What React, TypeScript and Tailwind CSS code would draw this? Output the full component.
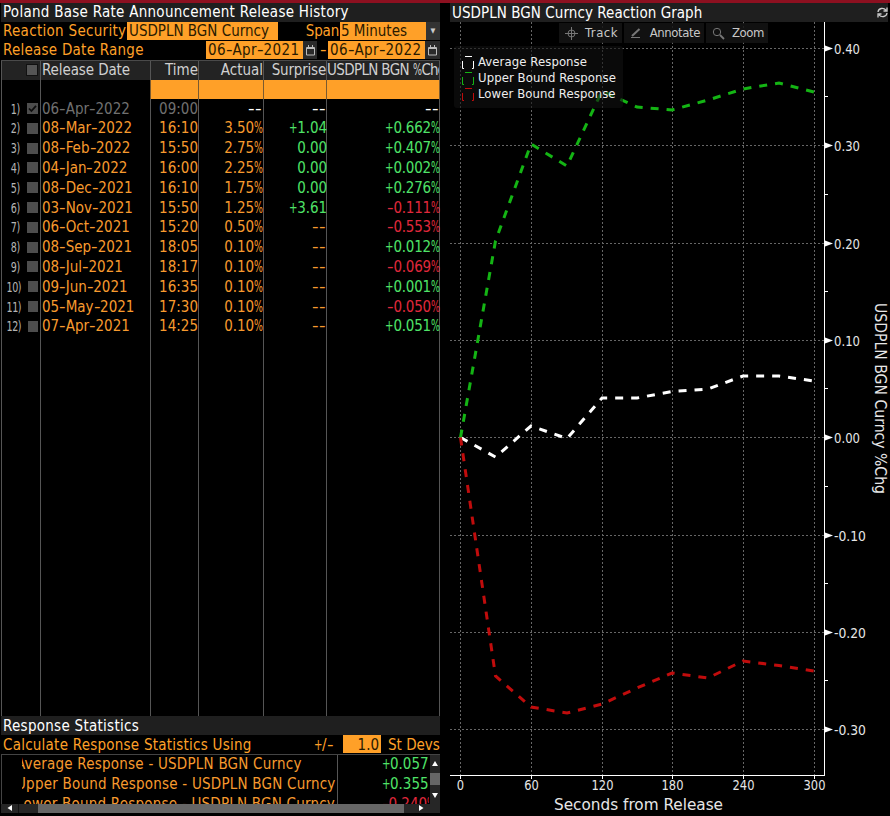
type Release = {
  date: string;
  time: string;
  actual: string;
  surprise: string;
  change: string;
};

const releases: Release[] = [
  { date: '06-Apr-2022', time: '09:00', actual: '--', surprise: '--', change: '--' },
  { date: '08-Mar-2022', time: '16:10', actual: '3.50%', surprise: '+1.04', change: '+0.662%' },
  { date: '08-Feb-2022', time: '15:50', actual: '2.75%', surprise: '0.00', change: '+0.407%' },
  { date: '04-Jan-2022', time: '16:00', actual: '2.25%', surprise: '0.00', change: '+0.002%' },
  { date: '08-Dec-2021', time: '16:10', actual: '1.75%', surprise: '0.00', change: '+0.276%' },
  { date: '03-Nov-2021', time: '15:50', actual: '1.25%', surprise: '+3.61', change: '-0.111%' },
  { date: '06-Oct-2021', time: '15:20', actual: '0.50%', surprise: '--', change: '-0.553%' },
  { date: '08-Sep-2021', time: '18:05', actual: '0.10%', surprise: '--', change: '+0.012%' },
  { date: '08-Jul-2021', time: '18:17', actual: '0.10%', surprise: '--', change: '-0.069%' },
  { date: '09-Jun-2021', time: '16:35', actual: '0.10%', surprise: '--', change: '+0.001%' },
  { date: '05-May-2021', time: '17:30', actual: '0.10%', surprise: '--', change: '-0.050%' },
  { date: '07-Apr-2021', time: '14:25', actual: '0.10%', surprise: '--', change: '+0.051%' },
];

const stats = [
  { label: 'Average Response - USDPLN BGN Curncy', value: '+0.057%' },
  { label: 'Upper Bound Response - USDPLN BGN Curncy', value: '+0.355%' },
  { label: 'Lower Bound Response - USDPLN BGN Curncy', value: '-0.240%' },
];

const columns = 'grid grid-cols-[39px_110px_48px_65px_63px_113px]';

function tone(value: string, dim: boolean) {
  if (dim) return 'text-white';
  if (value === '--') return 'text-[#f79a2e]';
  return value.startsWith('-') ? 'text-[#e0283c]' : 'text-[#4fe368]';
}

const signs: Record<string, string> = {
  '%': 'inline-block w-[9px] origin-left scale-x-[0.7] text-left',
  '+': 'inline-block w-[8px] origin-left scale-x-[0.75] text-left',
  '-': 'inline-block w-[6.5px] origin-left scale-x-[1.35] text-left',
};

function Glyphs({ text }: { text: string }) {
  return (
    <span className={`whitespace-nowrap ${text === '--' ? 'mr-[2px]' : ''}`}>
      {text.split(/([%+-])/).filter(Boolean).map((part, i) => (
        signs[part] ? <span key={i} className={signs[part]}>{part}</span> : part
      ))}
    </span>
  );
}

function CalendarIcon() {
  return (
    <svg width="11" height="13" fill="none" stroke="#bbb">
      <path d="M1.500 3.500h8v7.500h-8zM1 4.500h9" />
      <path d="M3.500 1v3M7.500 1v3" />
    </svg>
  );
}

function ReleaseTable() {
  return (
    <div className="relative h-[656px] border-t border-[#4a4a4a]">
      {/* Column rules run the full height of the table */}
      <div className={`${columns} absolute inset-0 border-l border-[#555]`}>
        {[0, 1, 2, 3, 4, 5].map((i) => (
          <div key={i} className="border-r border-[#555]" />
        ))}
      </div>
      <div className="relative">
        <div className="h-[19px] bg-[#232323]">
          <div className={`${columns} h-[19px] border-l border-[#555] leading-[18px] text-[#d0d0d0]`}>
            <div className="flex justify-end border-r border-[#555] pr-[2px] pt-[3px]">
              <span className="h-[12px] w-[12px] border border-[#111] bg-[#555]" />
            </div>
            <div className="border-r border-[#555] pl-px tracking-[-0.1px]">Release Date</div>
            <div className="border-r border-[#555] text-right">Time</div>
            <div className="border-r border-[#555] text-right">Actual</div>
            <div className="whitespace-nowrap border-r border-[#555] text-right tracking-[-0.2px]">Surprise</div>
            <div className="overflow-hidden whitespace-nowrap border-r border-[#555] tracking-[-0.65px]">
              USDPLN BGN <span className="tracking-[-1px]"><Glyphs text="%Chg" /></span>
            </div>
          </div>
        </div>
        <div className={`${columns} h-[18.6px] pl-px`}>
          <div />
          <div className="border-r border-[#7a5a30]" />
          <div className="border-r border-[#7a5a30] bg-[#ffa028]" />
          <div className="border-r border-[#7a5a30] bg-[#ffa028]" />
          <div className="border-r border-[#7a5a30] bg-[#ffa028]" />
          <div className="border-r border-[#7a5a30] bg-[#ffa028]" />
        </div>
        {releases.map((r, i) => (
          <div
            key={r.date}
            className={`${columns} h-[19.8px] pl-px leading-[20px] ${i === 0 ? 'text-[#707070]' : 'text-[#f79a2e]'}`}
          >
            <div className="flex items-center justify-end gap-[7px] pr-[3px]">
              <span className="origin-right scale-x-[0.76] text-[14px] tracking-[-0.6px] text-[#b4b4b4]">{i + 1})</span>
              <span className="grid h-[11px] w-[11px] place-items-center bg-[#4d4d4d]">
                {i === 0 && (
                  <svg width="9" height="9" viewBox="0 0 9 9" fill="none" stroke="#0c0c0c" strokeWidth="1.8">
                    <path d="M1 4.5 3.4 7 8 1.8" />
                  </svg>
                )}
              </span>
            </div>
            <div className="pl-px"><Glyphs text={r.date} /></div>
            <div className="pr-px text-right">{r.time}</div>
            <div className={`pr-px text-right tracking-[-0.1px] ${i === 0 ? 'text-white' : ''}`}><Glyphs text={r.actual} /></div>
            <div className={`text-right tracking-[-0.1px] ${tone(r.surprise, i === 0)}`}><Glyphs text={r.surprise} /></div>
            <div className={`text-right tracking-[-0.2px] ${tone(r.change, i === 0)}`}><Glyphs text={r.change} /></div>
          </div>
        ))}
      </div>
    </div>
  );
}

function HistoryPanel() {
  return (
    <section className="ml-px w-[439px] text-[15px]">
      <h1 className="h-[19px] bg-[#1f1f1f] pl-[2px] leading-[18px] tracking-[0.27px] text-white">Poland Base Rate Announcement Release History</h1>
      <div className="flex h-[19px] whitespace-nowrap leading-[18px] text-[#ffa028]">
        <span className="w-[126px] pl-[2px] tracking-[0.3px]">Reaction Security</span>
        <span className="h-[18px] w-[151px] bg-[#ffa028] pl-[2px] text-[#2a1a00]">USDPLN BGN Curncy</span>
        <span className="w-[62px] pr-px text-right tracking-[-0.2px]">Span</span>
        <span className="h-[18px] w-[86px] bg-[#ffa028] pl-px text-[#2a1a00]">5 Minutes</span>
        <span className="grid h-[18px] w-[14px] place-items-center bg-[#333] text-[7px] text-[#ccc]">▼</span>
      </div>
      <div className="flex h-[19px] whitespace-nowrap leading-[18px] text-[#ffa028]">
        <span className="w-[205px] pl-[2px] tracking-[0.25px]">Release Date Range</span>
        <span className="h-[18px] w-[97px] bg-[#ffa028] pl-[2px] tracking-[0.4px] text-[#2a1a00]"><Glyphs text="06-Apr-2021" /></span>
        <span className="grid h-[18px] w-[14px] place-items-center bg-[#2a2a2a]"><CalendarIcon /></span>
        <span className="w-[11px] pl-[3px]"><Glyphs text="-" /></span>
        <span className="h-[18px] w-[97px] bg-[#ffa028] pl-[2px] tracking-[0.4px] text-[#2a1a00]"><Glyphs text="06-Apr-2022" /></span>
        <span className="grid h-[18px] w-[15px] place-items-center bg-[#2a2a2a]"><CalendarIcon /></span>
      </div>
      <ReleaseTable />
      <h2 className="h-[19px] bg-[#1f1f1f] pl-[2px] leading-[20px] tracking-[0.28px] text-white">Response Statistics</h2>
      <div className="flex h-[19px] whitespace-nowrap leading-[20px] text-[#ffa028]">
        <span className="w-[313px] pl-[2px] tracking-[0.24px]">Calculate Response Statistics Using</span>
        <span className="w-[29px]"><Glyphs text="+/-" /></span>
        <span className="h-[18px] w-[38px] bg-[#ffa028] pr-[2px] text-right text-[#2a1a00]">1.0</span>
        <span className="flex-1 pl-[7px]">St Devs</span>
      </div>
      <div className="flex h-[50px] overflow-hidden border-l border-t border-[#444]">
        <div className="w-[428px]">
          {stats.map((s) => (
            <div key={s.label} className="flex h-[19.8px] leading-[19px]">
              <div className="ml-[20px] w-[316px] overflow-hidden whitespace-nowrap border-r border-[#555] tracking-[0.22px] text-[#f79a2e]">
                <span className="-ml-[6px]">{s.label}</span>
              </div>
              <div className={`w-[91px] overflow-hidden pl-[44px] ${tone(s.value, false)}`}><Glyphs text={s.value} /></div>
            </div>
          ))}
        </div>
        <div className="flex w-[10px] shrink-0 flex-col bg-[#262626]">
          <svg width="10" height="18"><path d="M2 11 5 6l3 5z" fill="#fff" /></svg>
          <div className="h-[12px] bg-[#666]" />
          <svg width="10" height="19"><path d="M2 8h6l-3 5z" fill="#fff" /></svg>
        </div>
      </div>
      <div className="flex h-[9px] bg-[#262626]">
        <svg width="37" height="9"><path d="M11 1v6L6.5 4z" fill="#fff" /><path d="M17.5 0v9" stroke="#111" /></svg>
        <div className="w-[366px] bg-[#666]" />
        <svg width="36" height="9"><path d="M15 1v6l4.500-3z" fill="#fff" /></svg>
      </div>
    </section>
  );
}

// Chart coordinates are relative to the plot's left edge and the bottom of the title bar
const gridX = [10.5, 81.5, 152.5, 222.5, 293.5, 364.5];
const gridY = [26.5, 123.5, 221.5, 318.5, 415.5, 513.5, 610.5, 707.5];
const xLabels = ['0', '60', '120', '180', '240', '300'];
const yLabels = ['0.40', '0.30', '0.20', '0.10', '0.00', '-0.10', '-0.20', '-0.30'];

const lines = [
  { color: '#fff', points: '10.5,415.5 45.5,435 81,404 117,416.5 152,376 187,376 222,369.5 258,367 293,354 329,354 364,359' },
  { color: '#14b414', points: '10.5,415.5 45.5,219 81,122 117,144 152,69 187,85 222,88 258,78 293,67 329,61 364,70' },
  { color: '#c00c0c', points: '10.5,415.5 45.5,654 81,685 117,691 152,682 187,666 222,651 258,656 293,639 329,643.5 364,649' },
];

const legend = [
  { label: 'Average Response', color: '#fff' },
  { label: 'Upper Bound Response', color: '#14b414' },
  { label: 'Lower Bound Response', color: '#c00c0c' },
];

function ReactionChart() {
  return (
    <svg width="440" height="794" className="block">
      <g stroke="#666" strokeDasharray="2 2">
        {gridX.map((x) => <path key={x} d={`M${x} 0V753`} />)}
        {gridY.map((y) => <path key={y} d={`M0 ${y}H374`} />)}
      </g>
      {lines.map((l) => (
        <polyline key={l.color} points={l.points} fill="none" stroke={l.color} strokeWidth="3" strokeDasharray="8 8" />
      ))}
      <g stroke="#fff">
        <path d="M374.5 0V754M0 753.5H375" />
        {gridX.map((x) => <path key={x} d={`M${x} 753V757`} />)}
        {gridY.slice(1).map((y) => <path key={y} d={`M374 ${y - 49}H378`} />)}
      </g>
      <g fill="#e6e6e6" fontSize="14">
        {gridY.map((y, i) => (
          <g key={y}>
            <path d={`M375 ${y - 3}L383 ${y}L375 ${y + 3}z`} fill="#fff" />
            <text x={384} y={y + 5.5} textLength={yLabels[i].length === 5 ? 32 : 26} lengthAdjust="spacingAndGlyphs">{yLabels[i]}</text>
          </g>
        ))}
        {gridX.map((x, i) => (
          <text key={x} x={x} y="768" textAnchor="middle" textLength={xLabels[i].length * 7.3} lengthAdjust="spacingAndGlyphs">{xLabels[i]}</text>
        ))}
      </g>
      <text x="188.5" y="788" textAnchor="middle" fill="#e6e6e6" fontSize="15.5" textLength="169" lengthAdjust="spacingAndGlyphs">Seconds from Release</text>
      <text transform="translate(425 281) rotate(90)" fill="#e6e6e6" fontSize="15.5" textLength="191" lengthAdjust="spacingAndGlyphs">USDPLN BGN Curncy %Chg</text>
    </svg>
  );
}

function GraphPanel() {
  return (
    <section className="ml-[10px] w-[440px]">
      <div className="flex h-[19px] w-[438px] items-center justify-between bg-[#1f1f1f] pl-[2px] text-[15px] text-white">
        <h1 className="leading-[18px] tracking-[0.06px]">USDPLN BGN Curncy Reaction Graph</h1>
        <svg width="11" height="11" viewBox="0 0 11 11" fill="none" stroke="#ccc" strokeWidth="1.3">
          <path d="M1 5C1.500 1 6.500.3 9 3.200M10 .5v3.500H6.500M10 6C9.500 10 4.500 10.700 2 7.800M1 10.500V7h3.500" />
        </svg>
      </div>
      <div className="relative">
        <ReactionChart />
        {/* Chart tools */}
        <div className="absolute left-[109px] top-[1px] flex h-[20px] gap-[2px] text-[13px] leading-[20px] text-[#c8c8c8]">
          <button className="flex w-[63px] items-center justify-between bg-[#141414]/85 pl-[6px] pr-[4px]">
            <svg width="13" height="13" fill="none" stroke="#777"><circle cx="6.5" cy="6.5" r="3.5" /><path d="M6.500 0v13M0 6.500h13" /></svg>
            <span className="tracking-[0.5px]">Track</span>
          </button>
          <button className="flex w-[80px] items-center justify-between bg-[#141414]/85 pl-[6px] pr-[4px]">
            <svg width="12" height="12" fill="none" stroke="#777"><path d="M2 9 9.500 2" strokeWidth="2" /><path d="M1 10.500h9" /></svg>
            <span className="tracking-[-0.4px]">Annotate</span>
          </button>
          <button className="flex w-[62px] items-center justify-between bg-[#141414]/85 pl-[6px] pr-[4px]">
            <svg width="13" height="13" fill="none" stroke="#777"><circle cx="5" cy="5" r="3.7" /><path d="m8 8 4 4" strokeWidth="1.8" /></svg>
            <span className="tracking-[-0.4px]">Zoom</span>
          </button>
        </div>
        {/* Legend */}
        <div className="absolute left-[4px] top-[24px] h-[62px] w-[169px] rounded-[3px] bg-[#111]/60 pl-[8px] pt-[8px]">
          {legend.map((item) => (
            <div key={item.label} className="flex h-[16px] items-center gap-[4px] text-[13px] leading-[16px] text-[#eee]">
              <svg width="12" height="13" fill="none" stroke={item.color}><path d="M3 .5h7M2 12.500H.5V5M10 12.500h1.500V5" /></svg>
              <span className="whitespace-nowrap tracking-[0.08px]">{item.label}</span>
            </div>
          ))}
        </div>
      </div>
    </section>
  );
}

export default function App() {
  return (
    <main className="h-[816px] w-[890px] overflow-hidden border-t-[3px] border-[#8c1020] bg-black font-['DejaVu_Sans_Condensed','DejaVu_Sans',sans-serif]">
      <div className="flex">
        <HistoryPanel />
        <GraphPanel />
      </div>
    </main>
  );
}
